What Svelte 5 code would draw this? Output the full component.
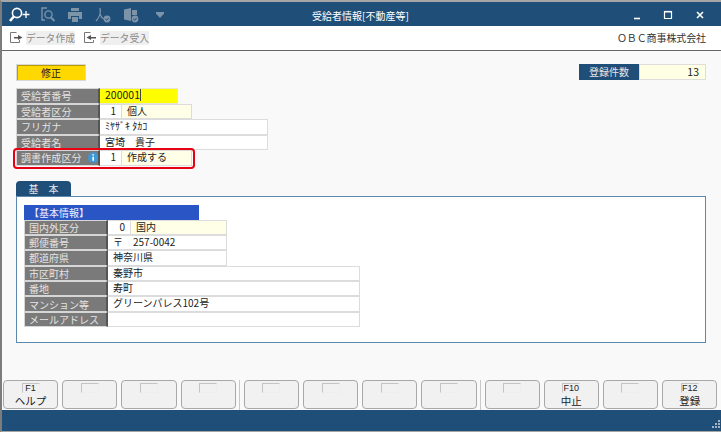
<script>
  const topRows = [
    { label: "受給者番号", kind: "input", value: "200001" },
    { label: "受給者区分", code: "1", name: "個人" },
    { label: "フリガナ", wide: "ﾐﾔｻﾞｷ ﾀｶｺ" },
    { label: "受給者名", wide: "宮埼　貴子" },
    { label: "調書作成区分", code: "1", name: "作成する", info: true },
  ];

  const basicRows = [
    { label: "国内外区分", code: "0", name: "国内" },
    { label: "郵便番号", text: "〒　257-0042", size: "mid" },
    { label: "都道府県", text: "神奈川県", size: "mid" },
    { label: "市区町村", text: "秦野市", size: "long" },
    { label: "番地", text: "寿町", size: "long" },
    { label: "マンション等", text: "グリーンパレス102号", size: "long" },
    { label: "メールアドレス", text: "", size: "long" },
  ];

  const keyGroups = [
    [{ f: "F1", name: "ヘルプ" }, {}, {}, {}],
    [{}, {}, {}, {}],
    [{}, { f: "F10", name: "中止" }, {}, { f: "F12", name: "登録" }],
  ];
</script>

<div class="window">
  <header class="titlebar">
    <div class="tools">
      <svg width="24" height="18" viewBox="0 0 24 18" fill="none" stroke="#fff" stroke-width="1.6">
        <circle cx="9" cy="7" r="4.6" />
        <path d="M5.8 10.5 2 15" stroke-width="2.6" />
        <path d="M18 5v7M14.5 8.5h7" stroke-width="1.3" />
      </svg>
      <svg class="dim" width="16" height="18" viewBox="0 0 16 18" fill="none" stroke="#7d93a8" stroke-width="1.4">
        <path d="M7 2H2v12h3" />
        <circle cx="8.5" cy="8.5" r="3.6" />
        <path d="m11 11.5 3.5 3.5" stroke-width="2" />
      </svg>
      <svg width="16" height="16" viewBox="0 0 16 16" fill="#7d93a8">
        <path d="M4 1h8v3H4zM1 5h14v7h-3V9H4v3H1z" />
        <path d="M5 10h6v5H5z" />
      </svg>
      <svg width="16" height="16" viewBox="0 0 16 16" fill="none" stroke="#7d93a8" stroke-width="1.3">
        <path d="M5 1c1 5 0 9-4 13M5 7c1 3 2 4 4 5" />
        <circle cx="12" cy="12" r="3.4" fill="#7d93a8" stroke="none" />
        <path d="m10.4 12 1.2 1.2 2-2.2" stroke="#1f4e79" stroke-width="1" />
      </svg>
      <svg width="16" height="16" viewBox="0 0 16 16" fill="#7d93a8">
        <path d="M1 2.5 8 1v13l-7-1.5z" />
        <path d="M9 3h5v5H9z" />
        <circle cx="12" cy="12" r="3.4" />
        <path d="m10.4 12 1.2 1.2 2-2.2" stroke="#1f4e79" stroke-width="1" fill="none" />
      </svg>
      <svg class="caret" width="8" height="6" viewBox="0 0 8 6" fill="#7d93a8"><path d="M0 0h8v1.4L4 6 0 1.4z" /></svg>
    </div>
    <div class="title">受給者情報[不動産等]</div>
    <div class="winbtns">
      <svg width="8" height="10" viewBox="0 0 8 10"><path d="M1 8.5h6" stroke="#fff" stroke-width="1.6" /></svg>
      <svg width="10" height="10" viewBox="0 0 10 10" fill="none" stroke="#fff" stroke-width="1.2"><path d="M1.5 1.5h7v7h-7z" /><path d="M1.5 1.7h7" stroke-width="1.6" /></svg>
      <svg width="10" height="10" viewBox="0 0 10 10" stroke="#fff" stroke-width="1.6"><path d="m2 2 6 6M8 2l-6 6" /></svg>
    </div>
  </header>

  <nav class="toolbar">
    <button class="tool">
      <svg width="13" height="12" viewBox="0 0 13 12" fill="none" stroke="#777">
        <path d="M6.5.5H.5v10h9V8" />
        <path d="M4 6.5V5h4V3l4.5 2.5L8 8V6.5z" fill="#555" stroke="none" />
      </svg>
      <span>データ作成</span>
    </button>
    <button class="tool">
      <svg width="13" height="12" viewBox="0 0 13 12" fill="none" stroke="#777">
        <path d="M6.5.5H.5v10h9V8" />
        <path d="M12 6.5V5H7V3L2.5 5.5 7 8V6.5z" fill="#555" stroke="none" />
      </svg>
      <span>データ受入</span>
    </button>
    <div class="company">ＯＢＣ商事株式会社</div>
  </nav>

  <main class="content">
    <div class="top">
      <div class="mode">修正</div>
      <div class="count">
        <span class="count-label">登録件数</span>
        <span class="count-value">13</span>
      </div>
    </div>

    <div class="form">
      {#each topRows as row}
        <div class="row">
          <div class="label">
            {row.label}
            {#if row.info}
              <svg width="11" height="11" viewBox="0 0 11 11">
                <circle cx="5.5" cy="5.5" r="5.5" fill="#3f97d6" />
                <path d="M5.5 2v1.4M5.5 4.6V9" stroke="#fff" stroke-width="1.7" />
              </svg>
            {/if}
          </div>
          {#if row.kind === "input"}
            <div class="cell yellow">{row.value}<i class="caret-line"></i></div>
          {:else if row.code}
            <div class="cell code">{row.code}</div>
            <div class="cell name">{row.name}</div>
          {:else}
            <div class="cell wide">{row.wide}</div>
          {/if}
        </div>
      {/each}
      <div class="highlight"></div>
    </div>

    <div class="tab">基　本</div>
    <section class="panel">
      <div class="section-head">【基本情報】</div>
      {#each basicRows as row}
        <div class="row basic">
          <div class="label">{row.label}</div>
          {#if row.code}
            <div class="cell code">{row.code}</div>
            <div class="cell name">{row.name}</div>
          {:else}
            <div class="cell {row.size}">{row.text}</div>
          {/if}
        </div>
      {/each}
    </section>
  </main>

  <div class="fkeys">
    {#each keyGroups as group, g}
      {#if g > 0}<div class="sep"></div>{/if}
      <div class="group">
        {#each group as key}
          <button class="fkey">
            <span class="fnum">{key.f ?? ""}</span>
            <span class="fname">{key.name ?? ""}</span>
          </button>
        {/each}
      </div>
    {/each}
  </div>

  <footer class="statusbar">
    <svg width="10" height="10" viewBox="0 0 10 10" fill="#9fb4c6">
      <path d="M8 0h2v2H8zM5 3h2v2H5zM8 3h2v2H8zM2 6h2v2H2zM5 6h2v2H5zM8 6h2v2H8z" />
    </svg>
  </footer>
</div>

<style>
  :global(body) {
    margin: 0;
    background: #fff;
  }

  .window {
    width: 721px;
    height: 432px;
    box-sizing: border-box;
    border-top: 2px solid #a6a6a6;
    border-bottom: 1px solid #a6a6a6;
    border-left: 2px solid #7c7c7c;
    display: flex;
    flex-direction: column;
    overflow: hidden;
    font-family: "Noto Sans CJK JP", "Liberation Sans", sans-serif;
    font-size: 10px;
    color: #222;
  }

  .titlebar {
    height: 24px;
    box-sizing: border-box;
    padding-top: 2px;
    background: #1f4e79;
    display: flex;
    align-items: center;
    position: relative;
    flex: none;
  }

  .tools {
    display: flex;
    align-items: center;
    gap: 12px;
    padding-left: 6px;
  }

  .tools .dim {
    margin-left: -4px;
    margin-right: -1px;
  }

  .tools .caret {
    margin-left: 5px;
  }

  .title {
    position: absolute;
    left: 0;
    right: 0;
    text-align: center;
    color: #fff;
    font-size: 10px;
    padding-right: 2px;
  }

  .winbtns {
    margin-left: auto;
    display: flex;
    align-items: center;
    gap: 22px;
    padding-right: 16px;
  }

  .toolbar {
    height: 25px;
    background: #fff;
    border-bottom: 1px solid #666;
    box-sizing: border-box;
    display: flex;
    align-items: center;
    padding: 0 15px 1px 8px;
    gap: 9px;
    flex: none;
  }

  .tool {
    display: flex;
    align-items: center;
    gap: 3px;
    padding: 0;
    border: 0;
    background: none;
    font: inherit;
    color: #8a8a8a;
  }

  .tool span {
    background: #efefef;
    width: 49px;
    height: 14px;
    line-height: 14px;
    font-size: 9.8px;
    white-space: nowrap;
  }

  .company {
    margin-left: auto;
    font-size: 10px;
    letter-spacing: -0.1px;
    color: #333;
  }

  .content {
    flex: 1;
    background: #f9f9f9;
    padding: 13px 15px 0 14px;
    min-height: 0;
  }

  .top {
    display: flex;
    justify-content: space-between;
    align-items: flex-start;
    height: 24px;
  }

  .mode {
    width: 70px;
    height: 17px;
    box-sizing: border-box;
    background: #ffd800;
    border: 1px solid #d8d8d8;
    box-shadow: inset 1px 1px 0 #b89c00;
    text-align: center;
    line-height: 15px;
    font-size: 10px;
  }

  .count {
    display: flex;
    height: 16px;
    line-height: 16px;
  }

  .count-label {
    width: 60px;
    background: #1f4e79;
    color: #e6e6e6;
    text-align: center;
  }

  .count-value {
    width: 67px;
    box-sizing: border-box;
    background: #ffffe4;
    border: 1px solid #ddd;
    text-align: right;
    padding-right: 6px;
    line-height: 14px;
    font-size: 10.5px;
  }

  .form {
    position: relative;
    width: 260px;
  }

  .row {
    display: flex;
    height: 15.5px;
  }

  .label {
    width: 84px;
    box-sizing: border-box;
    background: #7a7a7a;
    color: #e4e4e4;
    border: 1px solid #d6d6d6;
    border-right: 2px solid #555;
    padding-left: 4px;
    line-height: 13px;
    font-size: 10px;
    white-space: nowrap;
    display: flex;
    align-items: center;
    gap: 6px;
    letter-spacing: 0.1px;
  }

  .cell {
    box-sizing: border-box;
    height: 100%;
    line-height: 12.5px;
    border: 1px solid #dcdcdc;
    border-left: 0;
    background: #fff;
    padding-left: 5px;
    white-space: nowrap;
  }

  .cell.yellow {
    width: 78px;
    background: #ffff00;
    border-color: #e8e8d0;
    font-size: 10.5px;
  }

  .caret-line {
    display: inline-block;
    width: 1px;
    height: 12px;
    background: #444;
    vertical-align: -2px;
  }

  .cell.code {
    width: 22px;
    padding: 0 5px 0 0;
    text-align: right;
  }

  .cell.name {
    width: 70px;
    background: #ffffe8;
  }

  .cell.wide {
    width: 168px;
  }

  .highlight {
    position: absolute;
    left: -3px;
    top: 60px;
    width: 182px;
    height: 21px;
    box-sizing: border-box;
    border: 2.5px solid #e60012;
    border-radius: 4px;
  }

  .tab {
    width: 55px;
    height: 15px;
    margin-top: 15px;
    background: #1f4e79;
    color: #e8e8e8;
    border-radius: 4px 4px 0 0;
    text-align: center;
    line-height: 15px;
    font-size: 10px;
  }

  .panel {
    height: 147px;
    box-sizing: border-box;
    background: #fff;
    border: 1px solid #5c88ab;
    padding: 8px 7px 0;
  }

  .section-head {
    width: 175px;
    height: 15px;
    line-height: 15px;
    background: #2a55c4;
    color: #eef;
    padding-left: 5px;
    box-sizing: border-box;
    font-size: 10px;
  }

  .row.basic {
    height: 15.4px;
  }

  .row.basic .label {
    letter-spacing: 0;
  }

  .row.basic .cell.code {
    width: 23px;
  }

  .row.basic .cell.name {
    width: 96px;
  }

  .cell.mid {
    width: 119px;
  }

  .cell.long {
    width: 252px;
  }

  .fkeys {
    height: 30px;
    flex: none;
    background: #f9f9f9;
    display: flex;
    padding-left: 1px;
    gap: 3px;
    box-sizing: border-box;
  }

  .group {
    display: flex;
    gap: 4px;
  }

  .sep {
    width: 1px;
    margin: 0 0.5px;
    background: #c8c8c8;
  }

  .fkey {
    width: 55.2px;
    height: 29px;
    box-sizing: border-box;
    padding: 2px 0 0;
    border: 1px solid #a8a8a8;
    border-radius: 4px;
    background: #f1f1f1;
    display: flex;
    flex-direction: column;
    align-items: center;
    font: inherit;
    color: #222;
  }

  .fnum {
    width: 18px;
    height: 10px;
    box-sizing: border-box;
    border: 1px solid #c4c4c4;
    border-right-color: #eee;
    border-bottom-color: #eee;
    font-size: 9px;
    line-height: 8px;
    font-family: "Liberation Sans", sans-serif;
    text-align: center;
  }

  .fname {
    font-size: 10.5px;
    line-height: 14px;
    margin-top: 1px;
  }

  .statusbar {
    flex: none;
    height: 21px;
    background: #1f4e79;
    display: flex;
    justify-content: flex-end;
    align-items: flex-end;
    padding: 0 1px 1px 0;
    box-sizing: border-box;
  }
</style>
